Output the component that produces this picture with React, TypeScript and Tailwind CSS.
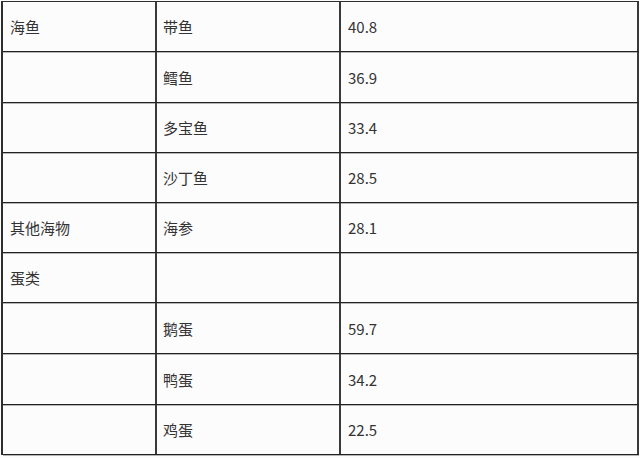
const rows: { c: [string, string, string]; h: string }[] = [
  { c: ["海鱼", "带鱼", "40.8"], h: "h-[50px]" },
  { c: ["", "鳕鱼", "36.9"], h: "h-[51px]" },
  { c: ["", "多宝鱼", "33.4"], h: "h-[50px]" },
  { c: ["", "沙丁鱼", "28.5"], h: "h-[50px]" },
  { c: ["其他海物", "海参", "28.1"], h: "h-[50px]" },
  { c: ["蛋类", "", ""], h: "h-[50px]" },
  { c: ["", "鹅蛋", "59.7"], h: "h-[51px]" },
  { c: ["", "鸭蛋", "34.2"], h: "h-[51px]" },
  { c: ["", "鸡蛋", "22.5"], h: "h-[50px]" },
];

export default function App() {
  return (
    <div
      className="w-[640px] h-[458px] bg-[#fdfcfd] pt-[1px] pl-[1px] text-[15px] text-[#333]"
      style={{ fontFamily: '"Noto Sans CJK SC", "Noto Sans", sans-serif' }}
    >
      {/* table */}
      <div className="w-[638px] border-t border-l-2 border-[#2e2e2e] flex flex-col">
        {rows.map((r, i) => (
          <div key={i} className={`flex border-b border-[#222] shadow-[0_1px_0_#b5b5b5] ${r.h}`}>
            <div className="w-[154px] border-r-2 border-[#3a3a3a] flex items-center pl-[7px] pt-[2px]">{r.c[0]}</div>
            <div className="w-[184px] border-r-2 border-[#3a3a3a] flex items-center pl-[6px] pt-[2px]">{r.c[1]}</div>
            <div className="w-[298px] border-r-2 border-[#3a3a3a] flex items-center pl-[7px] pt-[2px]">{r.c[2]}</div>
          </div>
        ))}
      </div>
    </div>
  );
}
